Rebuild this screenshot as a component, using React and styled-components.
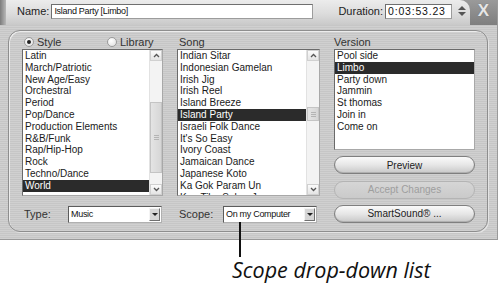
import React from 'react';
import styled, { createGlobalStyle } from 'styled-components';

const GlobalStyle = createGlobalStyle`
  html, body {
    margin: 0;
    padding: 0;
    background: #fff;
  }
  body {
    font-family: 'Liberation Sans', Arial, sans-serif;
    color: #222;
  }
`;

const metal = 'repeating-linear-gradient(180deg, #d0d0d0 0px, #d0d0d0 1px, #c6c6c6 1px, #c6c6c6 2px)';

const Page = styled.div`
  position: relative;
  width: 500px;
  height: 284px;
  overflow: hidden;
`;

const Dialog = styled.div`
  width: 498px;
  height: 240px;
  box-sizing: border-box;
  background: ${metal};
  border-right: 1px solid #9a9a9a;
  border-bottom: 1px solid #9a9a9a;
  display: flex;
  flex-direction: column;
`;

const Header = styled.div`
  height: 25px;
  display: flex;
  background: linear-gradient(180deg, #9a9a9a, #7e7e7e);
`;

const HeaderEdge = styled.div`
  width: 6px;
  background: linear-gradient(90deg, #7c7c7c, #b8b8b8);
`;

const TitleTab = styled.div`
  flex: 1;
  display: flex;
  align-items: center;
  padding: 0 0 3px 11px;
  background: linear-gradient(180deg, #ececec 0%, #dcdcdc 55%, #c9c9c9 100%);
  border-top-right-radius: 10px;
`;

const HeaderLabel = styled.span`
  font-size: 11px;
  color: #222;
  margin-left: ${p => p.$gap || 0}px;
  margin-right: 2px;
`;

const Field = styled.div`
  box-sizing: border-box;
  width: ${p => p.$w}px;
  height: 15px;
  background: #fff;
  border: 1px solid #9c9c9c;
  border-top-color: #6f6f6f;
  border-left-color: #6f6f6f;
  font-size: ${p => p.$size || 9}px;
  letter-spacing: ${p => p.$spacing || '-0.3px'};
  line-height: 13px;
  padding-left: 2px;
  white-space: nowrap;
  overflow: hidden;
  color: #111;
`;

const Spinner = styled.div`
  margin-left: 6px;
  display: flex;
  flex-direction: column;
  gap: 2px;
`;

const Close = styled.div`
  width: 27px;
  display: flex;
  align-items: center;
  justify-content: center;
  padding-bottom: 3px;
  font-size: 17px;
  font-weight: bold;
  color: #e6e6e6;
  text-shadow: 0 0 1px #666;
`;

const Panel = styled.div`
  margin: 5px 0 0 8px;
  width: 480px;
  height: 202px;
  box-sizing: border-box;
  border: 1px solid #8e8e8e;
  border-radius: 12px;
  box-shadow: inset 1px 1px 0 #ececec, 1px 1px 0 #e4e4e4;
  padding: 0 13px;
  display: grid;
  grid-template-columns: 141px 143px 141px;
  grid-template-rows: 18px 147px 27px;
  column-gap: 14px;
`;

const LabelRow = styled.div`
  display: flex;
  align-items: center;
  padding: 3px 0 0 ${p => p.$indent || 0}px;
  gap: 4px;
`;

const Label = styled.span`
  font-size: 11px;
  color: #333;
  width: ${p => (p.$w ? `${p.$w}px` : 'auto')};
`;

const Radio = styled.label`
  display: flex;
  align-items: center;
  gap: 3px;
  width: ${p => (p.$w ? `${p.$w}px` : 'auto')};
  font-size: 11px;
  color: #333;
`;

const RadioDot = styled.span`
  box-sizing: border-box;
  width: 10px;
  height: 10px;
  border-radius: 50%;
  border: 1px solid #9a9a9a;
  background: radial-gradient(circle at 40% 35%, #ffffff, #dcdcdc);
  display: flex;
  align-items: center;
  justify-content: center;

  &::after {
    content: '';
    width: 4px;
    height: 4px;
    border-radius: 50%;
    background: ${p => (p.$on ? '#222' : 'transparent')};
  }
`;

const ListBox = styled.div`
  box-sizing: border-box;
  height: ${p => p.$h || 147}px;
  background: #fff;
  border: 1px solid #a8a8a8;
  border-top-color: #6a6a6a;
  border-left-color: #6a6a6a;
  display: flex;
  overflow: hidden;
`;

const Items = styled.div`
  flex: 1;
  overflow: hidden;
`;

const Item = styled.div`
  height: 11.8px;
  line-height: 11.8px;
  font-size: 10px;
  padding-left: 2px;
  white-space: nowrap;
  background: ${p => (p.$selected ? '#2b2b2b' : 'transparent')};
  color: ${p => (p.$selected ? '#fff' : '#1a1a1a')};
`;

const ScrollBar = styled.div`
  width: 12px;
  display: flex;
  flex-direction: column;
  background: #f3f3f3;
  border-left: 1px solid #e2e2e2;
`;

const ScrollButton = styled.div`
  height: 11px;
  box-sizing: border-box;
  border: 1px solid #d0d0d0;
  background: linear-gradient(180deg, #fbfbfb, #e4e4e4);
  display: flex;
  align-items: center;
  justify-content: center;
`;

const Track = styled.div`
  flex: 1;
  display: flex;
  flex-direction: column;
`;

const Thumb = styled.div`
  box-sizing: border-box;
  margin-top: ${p => p.$top}px;
  height: ${p => p.$h}px;
  border: 1px solid #c4c4c4;
  background: linear-gradient(90deg, #e4e4e4, #d6d6d6);
  display: flex;
  flex-direction: column;
  align-items: center;
  justify-content: center;
  gap: 1px;

  & > i {
    display: block;
    width: 5px;
    height: 1px;
    background: #b4b4b4;
  }
`;

const VersionCol = styled.div`
  grid-column: 3;
  grid-row: 2 / 4;
  display: flex;
  flex-direction: column;
  justify-content: space-between;
`;

const PillButton = styled.div`
  box-sizing: border-box;
  height: 18px;
  border-radius: 9px;
  border: 1px solid ${p => (p.$disabled ? '#b4b4b4' : '#7f7f7f')};
  background: ${p =>
    p.$disabled
      ? 'linear-gradient(180deg, #d6d6d6, #cacaca)'
      : 'linear-gradient(180deg, #fafafa 0%, #e6e6e6 50%, #c8c8c8 100%)'};
  box-shadow: ${p => (p.$disabled ? 'none' : 'inset 0 -1px 0 #b0b0b0')};
  display: flex;
  align-items: center;
  justify-content: center;
  font-size: 10px;
  color: ${p => (p.$disabled ? '#9e9e9e' : '#222')};
`;

const BottomRow = styled.div`
  align-self: end;
  display: flex;
  align-items: center;
  height: 18px;
  padding-left: 2px;
`;

const Select = styled.div`
  box-sizing: border-box;
  width: 94px;
  height: 17px;
  background: #fff;
  border: 1px solid #b0b0b0;
  border-top-color: #5c5c5c;
  border-left-color: #5c5c5c;
  display: flex;
  align-items: center;
  justify-content: space-between;
  padding: 0 1px 0 2px;
  font-size: 9px;
  letter-spacing: -0.3px;
  color: #111;
`;

const SelectArrow = styled.div`
  box-sizing: border-box;
  width: 11px;
  height: 13px;
  background: #d6d6d6;
  border: 1px solid #f4f4f4;
  border-right-color: #707070;
  border-bottom-color: #707070;
  display: flex;
  align-items: center;
  justify-content: center;
`;

const CalloutLine = styled.div`
  position: absolute;
  left: 239px;
  top: 222px;
  width: 2px;
  height: 35px;
  background: #111;
`;

const Caption = styled.div`
  margin-top: 17px;
  padding-left: 232px;
  font-family: 'Open Sans', 'Noto Sans', sans-serif;
  font-style: italic;
  font-size: 21.5px;
  line-height: 26px;
  color: #111;
  white-space: nowrap;
`;

const Chevron = ({ up }) => (
  <svg width="7" height="5" viewBox="0 0 7 5">
    <path d={up ? 'M1 4 L3.5 1.5 L6 4' : 'M1 1 L3.5 3.5 L6 1'} fill="none" stroke="#555" strokeWidth="1.3" />
  </svg>
);

const Triangle = ({ up, color = '#222', w = 7, h = 4 }) => (
  <svg width={w} height={h} viewBox={`0 0 ${w} ${h}`}>
    <path d={up ? `M0 ${h} L${w / 2} 0 L${w} ${h} Z` : `M0 0 L${w / 2} ${h} L${w} 0 Z`} fill={color} />
  </svg>
);

const List = ({ items, selected, h, thumb }) => (
  <ListBox $h={h}>
    <Items>
      {items.map(t => (
        <Item key={t} $selected={t === selected}>{t}</Item>
      ))}
    </Items>
    {thumb && (
      <ScrollBar>
        <ScrollButton><Chevron up /></ScrollButton>
        <Track>
          <Thumb $top={thumb[0]} $h={thumb[1]}>
            <i /><i /><i />
          </Thumb>
        </Track>
        <ScrollButton><Chevron /></ScrollButton>
      </ScrollBar>
    )}
  </ListBox>
);

const styles = [
  'Latin', 'March/Patriotic', 'New Age/Easy', 'Orchestral', 'Period', 'Pop/Dance',
  'Production Elements', 'R&B/Funk', 'Rap/Hip-Hop', 'Rock', 'Techno/Dance', 'World',
];

const songs = [
  'Indian Sitar', 'Indonesian Gamelan', 'Irish Jig', 'Irish Reel', 'Island Breeze', 'Island Party',
  'Israeli Folk Dance', "It's So Easy", 'Ivory Coast', 'Jamaican Dance', 'Japanese Koto',
  'Ka Gok Param Un', 'Kan Tibe Sahra Ja',
];

const versions = ['Pool side', 'Limbo', 'Party down', 'Jammin', 'St thomas', 'Join in', 'Come on'];

export default function App() {
  return (
    <Page>
      <GlobalStyle />
      <Dialog>
        <Header>
          <HeaderEdge />
          <TitleTab>
            <HeaderLabel>Name:</HeaderLabel>
            <Field $w={262}>Island Party [Limbo]</Field>
            <HeaderLabel $gap={25}>Duration:</HeaderLabel>
            <Field $w={67} $size={10.5} $spacing="0.8px">0:03:53.23</Field>
            <Spinner>
              <Triangle up color="#555" w={8} h={4} />
              <Triangle color="#555" w={8} h={4} />
            </Spinner>
          </TitleTab>
          <Close>X</Close>
        </Header>

        <Panel>
          <LabelRow $indent={2}>
            <Radio $w={79}><RadioDot $on />Style</Radio>
            <Radio><RadioDot />Library</Radio>
          </LabelRow>
          <LabelRow $indent={2}><Label>Song</Label></LabelRow>
          <LabelRow><Label>Version</Label></LabelRow>

          <List items={styles} selected="World" thumb={[41, 71]} />
          <List items={songs} selected="Island Party" thumb={[46, 14]} />
          <VersionCol>
            <List items={versions} selected="Limbo" h={101} />
            <PillButton>Preview</PillButton>
            <PillButton $disabled>Accept Changes</PillButton>
            <PillButton>SmartSound® ...</PillButton>
          </VersionCol>

          <BottomRow>
            <Label $w={44}>Type:</Label>
            <Select>Music<SelectArrow><Triangle w={6} h={3} /></SelectArrow></Select>
          </BottomRow>
          <BottomRow>
            <Label $w={44}>Scope:</Label>
            <Select>On my Computer<SelectArrow><Triangle w={6} h={3} /></SelectArrow></Select>
          </BottomRow>
        </Panel>
      </Dialog>
      <CalloutLine />
      <Caption>Scope drop-down list</Caption>
    </Page>
  );
}
